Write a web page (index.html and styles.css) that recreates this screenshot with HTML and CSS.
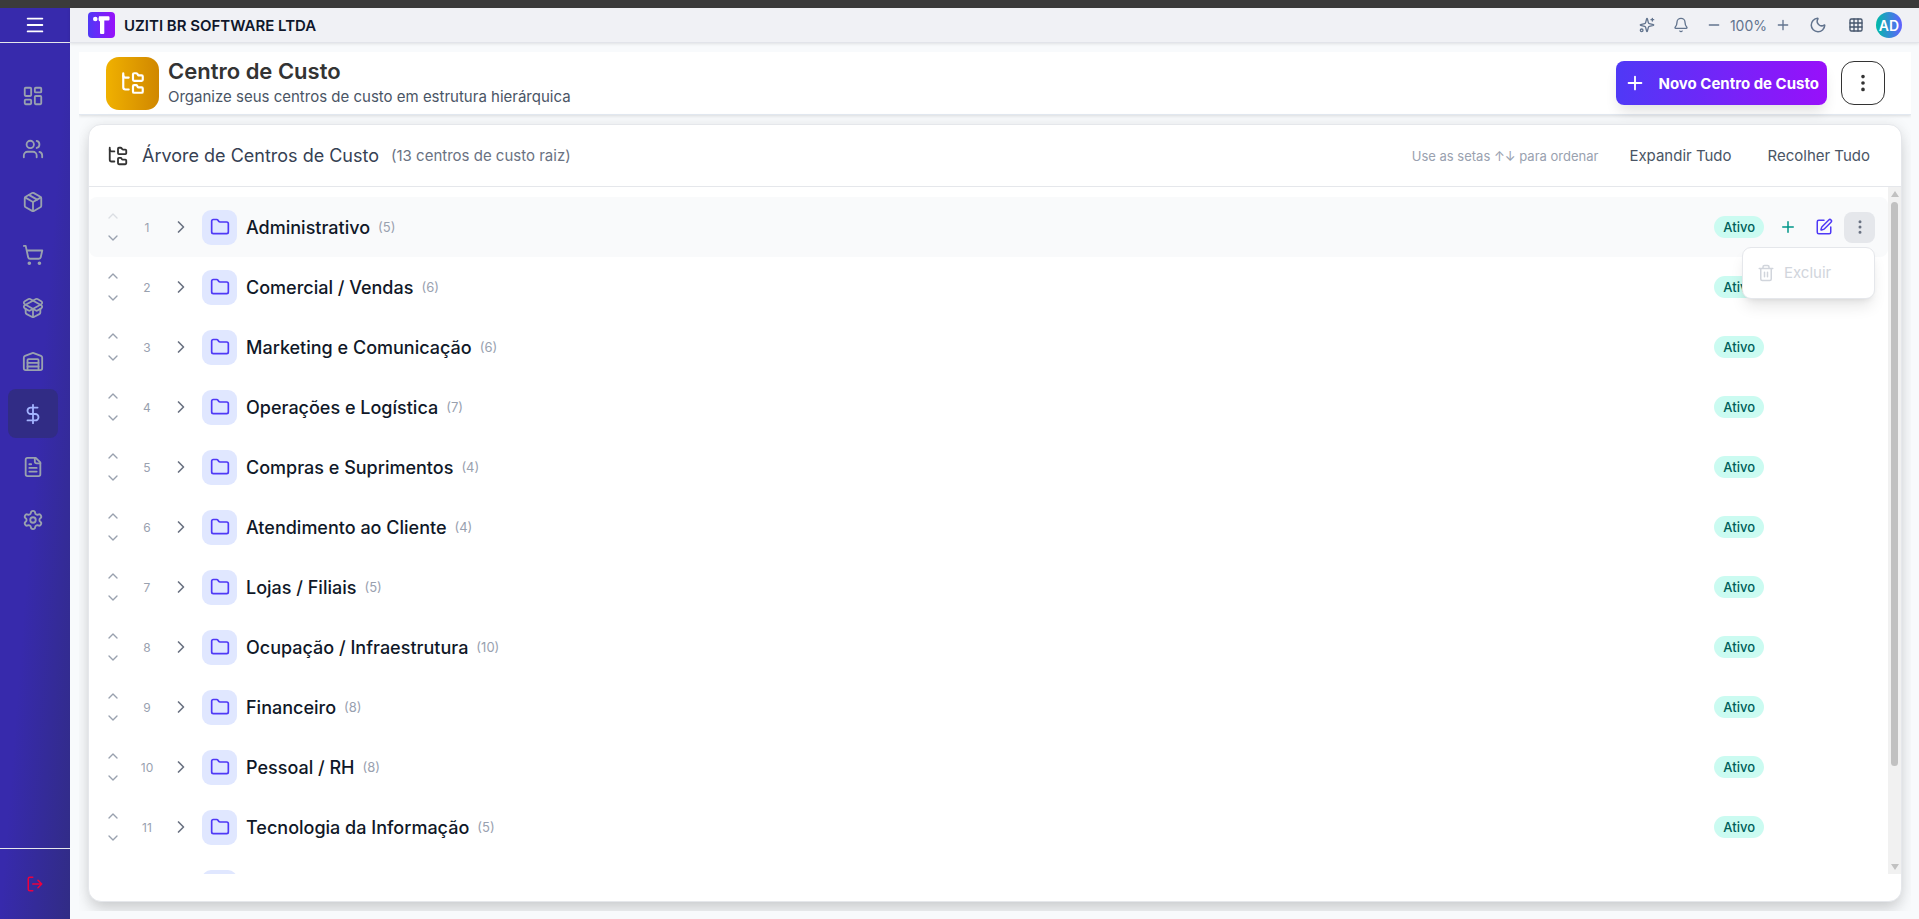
FILE: index.html
```html
<!DOCTYPE html>
<html lang="pt-BR">
<head>
  <meta charset="UTF-8" />
  <meta name="viewport" content="width=device-width, initial-scale=1.0"/>
  <title>Centro de Custo</title>
  <link rel="stylesheet" href="styles.css">
</head>
<body>

  <!-- Icons -->
  <svg class="sprite" aria-hidden="true">
    <symbol id="i-menu" viewBox="0 0 24 24"><path d="M4 5h16M4 12h16M4 19h16"/></symbol>
    <symbol id="i-dashboard" viewBox="0 0 24 24"><rect width="7" height="9" x="3" y="3" rx="1"/><rect width="7" height="5" x="14" y="3" rx="1"/><rect width="7" height="9" x="14" y="12" rx="1"/><rect width="7" height="5" x="3" y="16" rx="1"/></symbol>
    <symbol id="i-users" viewBox="0 0 24 24"><path d="M16 21v-2a4 4 0 0 0-4-4H6a4 4 0 0 0-4 4v2"/><circle cx="9" cy="7" r="4"/><path d="M22 21v-2a4 4 0 0 0-3-3.87M16 3.13a4 4 0 0 1 0 7.75"/></symbol>
    <symbol id="i-package" viewBox="0 0 24 24"><path d="M11 21.73a2 2 0 0 0 2 0l7-4A2 2 0 0 0 21 16V8a2 2 0 0 0-1-1.73l-7-4a2 2 0 0 0-2 0l-7 4A2 2 0 0 0 3 8v8a2 2 0 0 0 1 1.73z"/><path d="M12 22V12"/><path d="M3.29 7 12 12l8.71-5"/><path d="m7.5 4.27 9 5.15"/></symbol>
    <symbol id="i-cart" viewBox="0 0 24 24"><circle cx="8" cy="21" r="1"/><circle cx="19" cy="21" r="1"/><path d="M2.05 2.05h2l2.66 12.42a2 2 0 0 0 2 1.58h9.78a2 2 0 0 0 1.95-1.57l1.65-7.43H5.12"/></symbol>
    <symbol id="i-package-open" viewBox="0 0 24 24"><path d="M12 22v-9"/><path d="M15.17 2.21a1.67 1.67 0 0 1 1.63 0L21 4.57a1.93 1.93 0 0 1 0 3.36L8.82 14.79a1.655 1.655 0 0 1-1.64 0L3 12.43a1.93 1.93 0 0 1 0-3.36z"/><path d="M20 13v3.87a2.06 2.06 0 0 1-1.11 1.83l-6 3.08a1.93 1.93 0 0 1-1.78 0l-6-3.08A2.06 2.06 0 0 1 4 16.87V13"/><path d="M21 12.43a1.93 1.93 0 0 0 0-3.36L8.83 2.2a1.64 1.64 0 0 0-1.63 0L3 4.57a1.93 1.93 0 0 0 0 3.36l12.18 6.86a1.636 1.636 0 0 0 1.63 0z"/></symbol>
    <symbol id="i-warehouse" viewBox="0 0 24 24"><path d="M22 8.35V20a2 2 0 0 1-2 2H4a2 2 0 0 1-2-2V8.35A2 2 0 0 1 3.26 6.5l8-3.2a2 2 0 0 1 1.48 0l8 3.2A2 2 0 0 1 22 8.35Z"/><path d="M6 18h12M6 14h12"/><path d="M6 22V11a1 1 0 0 1 1-1h10a1 1 0 0 1 1 1v11"/></symbol>
    <symbol id="i-dollar" viewBox="0 0 24 24"><path d="M12 2v20"/><path d="M17 5H9.5a3.5 3.5 0 0 0 0 7h5a3.5 3.5 0 0 1 0 7H6"/></symbol>
    <symbol id="i-file" viewBox="0 0 24 24"><path d="M15 2H6a2 2 0 0 0-2 2v16a2 2 0 0 0 2 2h12a2 2 0 0 0 2-2V7Z"/><path d="M14 2v4a2 2 0 0 0 2 2h4M10 9H8M16 13H8M16 17H8"/></symbol>
    <symbol id="i-settings" viewBox="0 0 24 24"><path d="M9.671 4.136a2.34 2.34 0 0 1 4.659 0 2.34 2.34 0 0 0 3.319 1.915 2.34 2.34 0 0 1 2.33 4.033 2.34 2.34 0 0 0 0 3.831 2.34 2.34 0 0 1-2.33 4.033 2.34 2.34 0 0 0-3.319 1.915 2.34 2.34 0 0 1-4.659 0 2.34 2.34 0 0 0-3.32-1.915 2.34 2.34 0 0 1-2.33-4.033 2.34 2.34 0 0 0 0-3.831A2.34 2.34 0 0 1 6.35 6.051a2.34 2.34 0 0 0 3.319-1.915"/><circle cx="12" cy="12" r="3"/></symbol>
    <symbol id="i-logout" viewBox="0 0 24 24"><path d="M9 21H5a2 2 0 0 1-2-2V5a2 2 0 0 1 2-2h4M9 12h12M16 7l5 5-5 5"/></symbol>
    <symbol id="i-sparkles" viewBox="0 0 24 24"><path d="M9.94 15.5a2 2 0 0 0-1.44-1.44l-6.13-1.58a.5.5 0 0 1 0-.96L8.5 9.94A2 2 0 0 0 9.94 8.5l1.58-6.13a.5.5 0 0 1 .96 0l1.58 6.13a2 2 0 0 0 1.44 1.44l6.13 1.58a.5.5 0 0 1 0 .96l-6.13 1.58a2 2 0 0 0-1.44 1.44l-1.58 6.13a.5.5 0 0 1-.96 0z"/><path d="M20 2v4M22 4h-4"/><circle cx="4" cy="20" r="2"/></symbol>
    <symbol id="i-bell" viewBox="0 0 24 24"><path d="M10.27 21a2 2 0 0 0 3.46 0"/><path d="M3.26 15.33A1 1 0 0 0 4 17h16a1 1 0 0 0 .74-1.67C19.41 13.96 18 12.5 18 8A6 6 0 0 0 6 8c0 4.5-1.41 5.96-2.74 7.33"/></symbol>
    <symbol id="i-minus" viewBox="0 0 24 24"><path d="M5 12h14"/></symbol>
    <symbol id="i-plus" viewBox="0 0 24 24"><path d="M5 12h14M12 5v14"/></symbol>
    <symbol id="i-moon" viewBox="0 0 24 24"><path d="M20.985 12.486a9 9 0 1 1-9.473-9.472c.405-.022.617.46.402.803a6 6 0 0 0 8.268 8.268c.344-.215.825-.004.803.401"/></symbol>
    <symbol id="i-grid" viewBox="0 0 24 24"><rect width="18" height="18" x="3" y="3" rx="2"/><path d="M3 9h18M3 15h18M9 3v18M15 3v18"/></symbol>
    <symbol id="i-tree" viewBox="0 0 24 24"><path d="M20 10a1 1 0 0 0 1-1V6a1 1 0 0 0-1-1h-2.5a1 1 0 0 1-.8-.4l-.9-1.2A1 1 0 0 0 15 3h-2a1 1 0 0 0-1 1v5a1 1 0 0 0 1 1Z"/><path d="M20 21a1 1 0 0 0 1-1v-3a1 1 0 0 0-1-1h-2.9a1 1 0 0 1-.88-.55l-.42-.85a1 1 0 0 0-.92-.6H13a1 1 0 0 0-1 1v5a1 1 0 0 0 1 1Z"/><path d="M3 5a2 2 0 0 0 2 2h3"/><path d="M3 3v13a2 2 0 0 0 2 2h3"/></symbol>
    <symbol id="i-dots" viewBox="0 0 24 24"><circle cx="12" cy="12" r="1"/><circle cx="12" cy="5" r="1"/><circle cx="12" cy="19" r="1"/></symbol>
    <symbol id="i-up" viewBox="0 0 24 24"><path d="m18 15-6-6-6 6"/></symbol>
    <symbol id="i-down" viewBox="0 0 24 24"><path d="m6 9 6 6 6-6"/></symbol>
    <symbol id="i-right" viewBox="0 0 24 24"><path d="m9 18 6-6-6-6"/></symbol>
    <symbol id="i-folder" viewBox="0 0 24 24"><path d="M20 20a2 2 0 0 0 2-2V8a2 2 0 0 0-2-2h-7.9a2 2 0 0 1-1.69-.9L9.6 3.9A2 2 0 0 0 7.93 3H4a2 2 0 0 0-2 2v13a2 2 0 0 0 2 2Z"/></symbol>
    <symbol id="i-edit" viewBox="0 0 24 24"><path d="M12 3H5a2 2 0 0 0-2 2v14a2 2 0 0 0 2 2h14a2 2 0 0 0 2-2v-7"/><path d="M18.375 2.625a1 1 0 0 1 3 3l-9.013 9.014a2 2 0 0 1-.853.505l-2.873.84a.5.5 0 0 1-.62-.62l.84-2.873a2 2 0 0 1 .506-.852z"/></symbol>
    <symbol id="i-trash" viewBox="0 0 24 24"><path d="M3 6h18M19 6v14a2 2 0 0 1-2 2H7a2 2 0 0 1-2-2V6M8 6V4a2 2 0 0 1 2-2h4a2 2 0 0 1 2 2v2M10 11v6M14 11v6"/></symbol>
  </svg>

  <div class="window-strip"></div>

  <div class="app">
    <!-- Sidebar -->
    <aside class="sidebar">
      <button class="menu-btn" aria-label="Menu"><svg class="icon icon-22"><use href="#i-menu"/></svg></button>
      <nav class="side-nav">
        <a href="#" aria-label="Painel"><svg class="icon icon-22"><use href="#i-dashboard"/></svg></a>
        <a href="#" aria-label="Pessoas"><svg class="icon icon-22"><use href="#i-users"/></svg></a>
        <a href="#" aria-label="Produtos"><svg class="icon icon-22"><use href="#i-package"/></svg></a>
        <a href="#" aria-label="Vendas"><svg class="icon icon-22"><use href="#i-cart"/></svg></a>
        <a href="#" aria-label="Compras"><svg class="icon icon-22"><use href="#i-package-open"/></svg></a>
        <a href="#" aria-label="Estoque"><svg class="icon icon-22"><use href="#i-warehouse"/></svg></a>
        <a href="#" aria-label="Financeiro" class="active"><svg class="icon icon-22"><use href="#i-dollar"/></svg></a>
        <a href="#" aria-label="Fiscal"><svg class="icon icon-22"><use href="#i-file"/></svg></a>
        <a href="#" aria-label="Configurações"><svg class="icon icon-22"><use href="#i-settings"/></svg></a>
      </nav>
      <button class="logout-btn" aria-label="Sair"><svg class="icon icon-18"><use href="#i-logout"/></svg></button>
    </aside>

    <div class="content">
      <!-- Top bar -->
      <header class="topbar">
        <svg class="logo" viewBox="0 0 27 26" aria-hidden="true">
          <defs>
            <linearGradient id="logoBg"><stop offset="0" stop-color="#4f39f6"/><stop offset="1" stop-color="#9810fa"/></linearGradient>
          </defs>
          <rect width="27" height="26" rx="4" fill="url(#logoBg)"/>
          <circle cx="7.300" cy="7" r="2.300" fill="#fff"/>
          <path d="M11 4.200h9.500a1 1 0 0 1 1 1V7.500a1 1 0 0 1-1 1H16.300V21a1 1 0 0 1-1 1H13a1 1 0 0 1-1-1V9.500Q10.500 9 10.500 7z" fill="#fff"/>
        </svg>
        <span class="company">UZITI BR SOFTWARE LTDA</span>
        <div class="tools">
          <button class="tool" aria-label="Assistente"><svg class="icon icon-16"><use href="#i-sparkles"/></svg></button>
          <button class="tool" aria-label="Notificações"><svg class="icon icon-16"><use href="#i-bell"/></svg></button>
          <div class="zoom">
            <button class="tool-sm" aria-label="Diminuir"><svg class="icon icon-16"><use href="#i-minus"/></svg></button>
            <span>100%</span>
            <button class="tool-sm" aria-label="Aumentar"><svg class="icon icon-16"><use href="#i-plus"/></svg></button>
          </div>
          <button class="tool" aria-label="Tema escuro"><svg class="icon icon-18"><use href="#i-moon"/></svg></button>
          <button class="tool tool-dark" aria-label="Aplicativos"><svg class="icon icon-16"><use href="#i-grid"/></svg></button>
          <button class="avatar">AD</button>
        </div>
      </header>

      <main class="page">
        <!-- Page header -->
        <section class="page-header">
          <div class="page-icon"><svg class="icon icon-26"><use href="#i-tree"/></svg></div>
          <div class="page-title">
            <h1>Centro de Custo</h1>
            <p>Organize seus centros de custo em estrutura hierárquica</p>
          </div>
          <button class="btn-new"><svg class="icon icon-22"><use href="#i-plus"/></svg>Novo Centro de Custo</button>
          <button class="btn-more" aria-label="Mais opções"><svg class="icon icon-22"><use href="#i-dots"/></svg></button>
        </section>

        <!-- Tree -->
        <section class="card">
          <div class="card-header">
            <svg class="icon icon-22"><use href="#i-tree"/></svg>
            <h2>Árvore de Centros de Custo</h2>
            <span class="total">(13 centros de custo raiz)</span>
            <span class="hint">Use as setas ↑↓ para ordenar</span>
            <button>Expandir Tudo</button>
            <button>Recolher Tudo</button>
          </div>
          <div class="card-body">
            <ul class="tree" id="tree"></ul>
            <div class="scrollbar" aria-hidden="true"><div class="thumb"></div></div>
          </div>
        </section>
      </main>
    </div>
  </div>

  <script>
    const centros = [
      { nome: "Administrativo", filhos: 5 },
      { nome: "Comercial / Vendas", filhos: 6 },
      { nome: "Marketing e Comunicação", filhos: 6 },
      { nome: "Operações e Logística", filhos: 7 },
      { nome: "Compras e Suprimentos", filhos: 4 },
      { nome: "Atendimento ao Cliente", filhos: 4 },
      { nome: "Lojas / Filiais", filhos: 5 },
      { nome: "Ocupação / Infraestrutura", filhos: 10 },
      { nome: "Financeiro", filhos: 8 },
      { nome: "Pessoal / RH", filhos: 8 },
      { nome: "Tecnologia da Informação", filhos: 5 }
    ];

    const icon = (name, size) => `<svg class="icon icon-${size}"><use href="#i-${name}"/></svg>`;

    // Row actions, shown only on the open row
    const actions = `
      <button class="row-btn add" aria-label="Adicionar">${icon("plus", 18)}</button>
      <button class="row-btn edit" aria-label="Editar">${icon("edit", 18)}</button>
      <button class="row-btn open" aria-label="Opções">${icon("dots", 18)}</button>
      <div class="menu"><button disabled>${icon("trash", 18)}Excluir</button></div>`;

    const rows = centros.map((c, i) => `
      <li class="row ${i === 0 ? "active" : ""}">
        <div class="order">
          <button aria-label="Subir" ${i === 0 ? "disabled" : ""}>${icon("up", 16)}</button>
          <button aria-label="Descer">${icon("down", 16)}</button>
        </div>
        <span class="position">${i + 1}</span>
        <button class="toggle" aria-label="Expandir">${icon("right", 20)}</button>
        <span class="folder">${icon("folder", 20)}</span>
        <span class="name">${c.nome}</span>
        <span class="count">(${c.filhos})</span>
        <span class="badge">Ativo</span>
        <div class="actions">${i === 0 ? actions : ""}</div>
      </li>`);

    // Next row, still without data
    rows.push(`<li class="row next"><span class="folder"></span></li>`);

    document.getElementById("tree").innerHTML = rows.join("");
  </script>
</body>
</html>
```
FILE: styles.css
```css
* { box-sizing: border-box; }
body {
  font-family: Inter, 'Liberation Sans', sans-serif;
  margin: 0;
  height: 100vh;
  display: flex;
  flex-direction: column;
  overflow: hidden;
  background: #f8fafc;
  color: #333;
}
button {
  font: inherit;
  color: inherit;
  background: none;
  border: none;
  padding: 0;
  cursor: pointer;
  display: flex;
  align-items: center;
  justify-content: center;
}
h1, h2, p, ul { margin: 0; padding: 0; }
.sprite {
  position: absolute;
  width: 0;
  height: 0;
}
.icon {
  fill: none;
  stroke: currentColor;
  stroke-width: 2;
  stroke-linecap: round;
  stroke-linejoin: round;
  flex-shrink: 0;
  display: block;
}
.icon-16 { width: 16px; height: 16px; }
.icon-18 { width: 18px; height: 18px; }
.icon-20 { width: 20px; height: 20px; }
.icon-22 { width: 22px; height: 22px; }
.icon-26 { width: 26px; height: 26px; }

.window-strip {
  height: 8px;
  flex-shrink: 0;
  background: #3b3b3b;
}
.app {
  flex: 1;
  min-height: 0;
  display: flex;
}

/* Sidebar */
.sidebar {
  width: 70px;
  flex-shrink: 0;
  display: flex;
  flex-direction: column;
  background: linear-gradient(to bottom right, #372aac 50%, #312c85);
}
.menu-btn {
  height: 35px;
  color: #fff;
  border-bottom: 1px solid #e5e7eb;
}
.side-nav {
  flex: 1;
  display: flex;
  flex-direction: column;
  gap: 4px;
  padding: 28px 12px 0 8px;
}
.side-nav a {
  height: 49px;
  display: flex;
  align-items: center;
  justify-content: center;
  color: #99a1af;
  border-radius: 8px;
}
.side-nav a.active {
  background: #312c85;
  color: #a3b3ff;
}
.logout-btn {
  height: 71px;
  border-top: 1px solid #e5e7eb;
  color: #ec003f;
}

/* Top bar */
.content {
  flex: 1;
  min-width: 0;
  display: flex;
  flex-direction: column;
}
.topbar {
  height: 35px;
  flex-shrink: 0;
  display: flex;
  align-items: center;
  padding: 0 17px 0 18px;
  background: #f0f1f5;
  border-bottom: 1px solid #e2e4ea;
  box-shadow: 0 1px 3px rgba(0,0,0,0.1);
}
.logo {
  width: 27px;
  height: 26px;
  margin-right: 9px;
}
.company {
  font-size: 15px;
  font-weight: 600;
  color: #0f172b;
}
.tools {
  margin-left: auto;
  display: flex;
  align-items: center;
  color: #62748e;
}
.tool {
  width: 34px;
  height: 26px;
}
.tool-dark {
  color: #45556c;
  width: 41px;
}
.zoom {
  display: flex;
  align-items: center;
  gap: 8px;
  margin: 0 10px 0 8px;
  font-size: 14px;
}
.avatar {
  width: 26px;
  height: 26px;
  border-radius: 50%;
  background: linear-gradient(to right, #00bba7, #615fff);
  color: #fff;
  font-size: 14px;
  font-weight: 600;
}

/* Page header */
.page {
  flex: 1;
  min-height: 0;
  display: flex;
  flex-direction: column;
  gap: 9px;
  margin: 9px 8px 8px 9px;
  overflow: hidden;
}
.page-header {
  height: 63px;
  flex-shrink: 0;
  display: flex;
  align-items: center;
  padding: 0 26px 0 27px;
  background: #fff;
  border-bottom: 1px solid #e2e8f0;
  box-shadow: 0 1px 3px rgba(0,0,0,0.12);
}
.page-icon {
  width: 53px;
  height: 53px;
  display: flex;
  align-items: center;
  justify-content: center;
  margin-right: 9px;
  border-radius: 13px;
  background: linear-gradient(to right, #f0b100, #d08700);
  color: #fff;
}
.page-title { margin-right: auto; }
.page-title h1 {
  font-size: 22px;
  line-height: 28px;
  font-weight: 600;
}
.page-title p {
  font-size: 15px;
  line-height: 24px;
  color: #4a5565;
}
.btn-new {
  height: 44px;
  gap: 12px;
  padding: 0 8px;
  margin-right: 14px;
  border-radius: 8px;
  background: linear-gradient(to right, #4f39f6, #9810fa);
  box-shadow: 0 9px 14px -3px rgba(0,0,0,0.12);
  color: #fff;
  font-size: 15px;
  font-weight: 700;
}
.btn-more {
  width: 44px;
  height: 44px;
  border: 1px solid #333;
  border-radius: 13px;
}

/* Card */
.card {
  flex: 1;
  min-height: 0;
  display: flex;
  flex-direction: column;
  margin: 0 9px 9px;
  padding-bottom: 27px;
  background: #fff;
  border: 1px solid #e5e7eb;
  border-radius: 13px;
  box-shadow: 0 10px 16px -2px rgba(0,0,0,0.15), 0 0 14px rgba(0,0,0,0.07);
}
.card-header {
  height: 62px;
  flex-shrink: 0;
  display: flex;
  align-items: center;
  padding: 0 13px 0 18px;
  border-bottom: 1px solid #e5e7eb;
}
.card-header h2 {
  margin: 0 12px 0 13px;
  font-size: 18px;
  font-weight: 400;
  color: #364153;
}
.card-header button {
  height: 36px;
  padding: 0 18px;
  font-size: 15px;
  color: #4a5565;
}
.total {
  font-size: 15px;
  color: #6a7282;
}
.hint {
  margin: 0 13px 0 auto;
  font-size: 13px;
  color: #99a1af;
}
.card-body {
  flex: 1;
  min-height: 0;
  display: flex;
}
.tree {
  flex: 1;
  min-width: 0;
  list-style: none;
  padding-top: 10px;
  overflow: hidden;
}
.row {
  height: 60px;
  display: flex;
  align-items: center;
  padding: 0 13px;
  border-radius: 8px;
}
.row.active { background: #f9fafb; }
.row.next { padding-left: 113px; }
.order {
  display: flex;
  flex-direction: column;
  gap: 4px;
  color: #99a1af;
}
.order button {
  width: 21px;
  height: 18px;
}
.order button:disabled { opacity: 0.3; }
.position {
  width: 48px;
  text-align: center;
  font-size: 12px;
  color: #99a1af;
}
.toggle {
  width: 20px;
  margin-right: 11px;
  color: #6a7282;
}
.folder {
  width: 35px;
  height: 35px;
  display: flex;
  align-items: center;
  justify-content: center;
  margin-right: 9px;
  border-radius: 9px;
  background: #e0e7ff;
  color: #4f39f6;
}
.name {
  font-size: 18px;
  font-weight: 500;
  color: #101828;
}
.count {
  margin: 0 auto 0 8px;
  font-size: 13px;
  color: #99a1af;
}
.badge {
  padding: 0 9px;
  border-radius: 11px;
  background: #cbfbf1;
  color: #005f5a;
  font-size: 13px;
  line-height: 22px;
  font-weight: 500;
}
.actions {
  position: relative;
  width: 111px;
  display: flex;
  gap: 5px;
  padding-left: 8px;
}
.row-btn {
  width: 31px;
  height: 31px;
  border-radius: 8px;
}
.add { color: #009689; }
.edit { color: #4f39f6; }
.open {
  background: #e5e7eb;
  color: #6a7282;
}
.menu {
  position: absolute;
  top: 35px;
  right: 0;
  width: 133px;
  padding: 4px 0;
  background: #fff;
  border: 1px solid #e5e7eb;
  border-radius: 9px;
  box-shadow: 0 10px 15px -3px rgba(0,0,0,0.1), 0 4px 6px -4px rgba(0,0,0,0.1);
}
.menu button {
  height: 42px;
  gap: 9px;
  padding: 0 14px;
  font-size: 15px;
  color: #d1d5dc;
}

/* Scrollbar */
.scrollbar {
  width: 13px;
  flex-shrink: 0;
  display: flex;
  flex-direction: column;
  align-items: center;
  gap: 5px;
  padding: 4px 0;
  background: #f1f1f1;
}
.scrollbar::before,
.scrollbar::after {
  content: "";
  border: 4px solid transparent;
  border-top-width: 0;
  border-bottom: 6px solid #c1c1c1;
}
.scrollbar::after {
  margin-top: auto;
  border-top: 6px solid #c1c1c1;
  border-bottom-width: 0;
}
.thumb {
  width: 7px;
  height: 83%;
  border-radius: 4px;
  background: #c1c1c1;
}
```
